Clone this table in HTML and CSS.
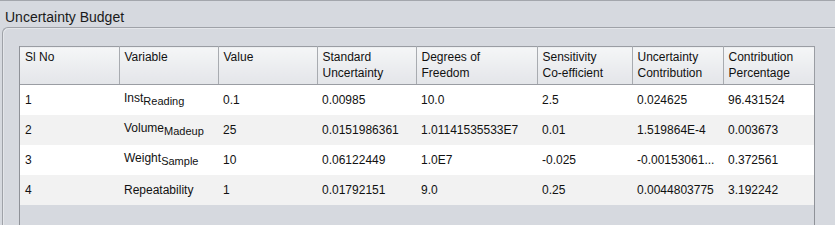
FILE: index.html
```html
<!DOCTYPE html>
<html>
<head>
<meta charset="utf-8">
<link rel="stylesheet" href="styles.css">
</head>
<body>
<div class="window">
  <div class="title">Uncertainty Budget</div>
  <div class="frame">
    <div class="scroll">
      <table class="grid">
        <colgroup>
          <col class="c99"><col class="c99"><col class="c99"><col class="c99">
          <col class="c121"><col class="c95"><col class="c91"><col class="c91">
        </colgroup>
        <thead>
          <tr>
            <th>Sl No</th>
            <th>Variable</th>
            <th>Value</th>
            <th>Standard<br>Uncertainty</th>
            <th>Degrees of<br>Freedom</th>
            <th>Sensitivity<br>Co-efficient</th>
            <th>Uncertainty<br>Contribution</th>
            <th>Contribution<br>Percentage</th>
          </tr>
        </thead>
        <tbody>
          <tr>
            <td>1</td><td>Inst<sub>Reading</sub></td><td>0.1</td><td>0.00985</td>
            <td>10.0</td><td>2.5</td><td>0.024625</td><td>96.431524</td>
          </tr>
          <tr class="alt">
            <td>2</td><td>Volume<sub>Madeup</sub></td><td>25</td><td>0.0151986361</td>
            <td>1.01141535533E7</td><td>0.01</td><td>1.519864E-4</td><td>0.003673</td>
          </tr>
          <tr>
            <td>3</td><td>Weight<sub>Sample</sub></td><td>10</td><td>0.06122449</td>
            <td>1.0E7</td><td>-0.025</td><td>-0.00153061...</td><td>0.372561</td>
          </tr>
          <tr class="alt">
            <td>4</td><td>Repeatability</td><td>1</td><td>0.01792151</td>
            <td>9.0</td><td>0.25</td><td>0.0044803775</td><td>3.192242</td>
          </tr>
        </tbody>
      </table>
    </div>
  </div>
</div>
</body>
</html>
```

FILE: styles.css
```css
html, body {
  margin: 0;
  padding: 0;
  background: #ffffff;
}

.window {
  height: 224px;
  background: #d6d9df;
  border-top: 1px solid #a3a6ac;
  overflow: hidden;
  display: flex;
  flex-direction: column;
  font-family: "Liberation Sans", Arial, sans-serif;
}

.title {
  height: 26px;
  padding-left: 5px;
  font-size: 14px;
  line-height: 24px;
  color: #1a1a1a;
  box-sizing: border-box;
  padding-top: 4px;
}

.frame {
  flex: 1;
  margin-left: 2px;
  border-top: 1px solid #9fa2a8;
  border-left: 1px solid #9fa2a8;
  border-top-left-radius: 6px;
  box-shadow: inset 1px 1px 0 #e4e6ea;
  padding: 18px 0 0 16px;
  display: flex;
}

.scroll {
  width: 794px;
  border-left: 1px solid #8f9298;
  border-right: 1px solid #8f9298;
  align-self: stretch;
}

.grid {
  border-collapse: collapse;
  table-layout: fixed;
  width: 794px;
  font-size: 12px;
  color: #111111;
}

.c99 { width: 99px; }
.c121 { width: 121px; }
.c95 { width: 95px; }
.c91 { width: 91px; }

.grid th {
  height: 38px;
  box-sizing: border-box;
  padding: 2px 0 0 5px;
  text-align: left;
  vertical-align: top;
  font-weight: normal;
  line-height: 16px;
  background: linear-gradient(#f5f6f7, #e3e5e9);
  border-top: 1px solid #9a9da3;
  border-bottom: 1px solid #9a9da3;
  border-right: 1px solid #a8abb0;
}

.grid th:last-child {
  border-right: 1px solid #9a9da3;
}

.grid td {
  height: 30px;
  box-sizing: border-box;
  padding: 0 0 0 5px;
  vertical-align: middle;
  white-space: nowrap;
  overflow: hidden;
  background: #ffffff;
}

.grid tr.alt td {
  background: #f2f2f2;
}

.grid sub {
  font-size: 11px;
  vertical-align: -3px;
  line-height: 16px;
}
```
